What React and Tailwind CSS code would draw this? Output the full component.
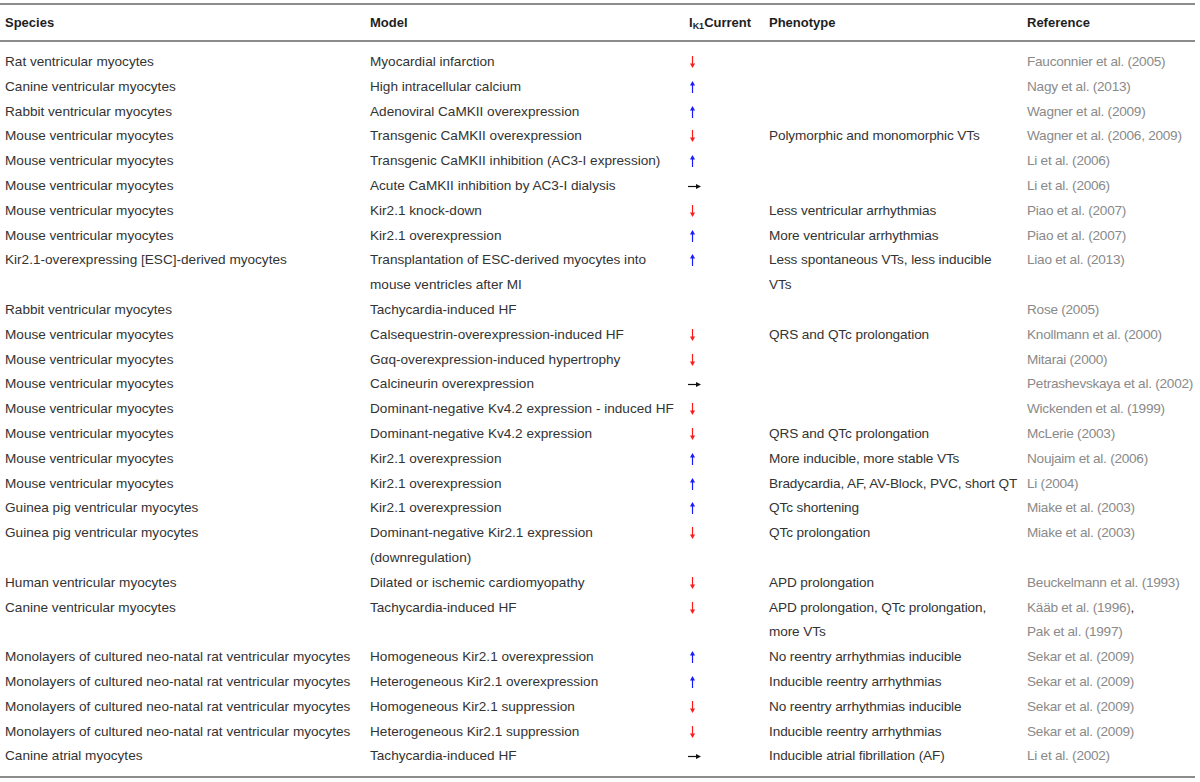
import React from "react";

const UP = "up";
const DOWN = "down";
const FLAT = "flat";

const rows = [
  { species: "Rat ventricular myocytes", model: ["Myocardial infarction"], current: DOWN, phenotype: [], ref: ["Fauconnier et al. (2005)"] },
  { species: "Canine ventricular myocytes", model: ["High intracellular calcium"], current: UP, phenotype: [], ref: ["Nagy et al. (2013)"] },
  { species: "Rabbit ventricular myocytes", model: ["Adenoviral CaMKII overexpression"], current: UP, phenotype: [], ref: ["Wagner et al. (2009)"] },
  { species: "Mouse ventricular myocytes", model: ["Transgenic CaMKII overexpression"], current: DOWN, phenotype: ["Polymorphic and monomorphic VTs"], ref: ["Wagner et al. (2006, 2009)"] },
  { species: "Mouse ventricular myocytes", model: ["Transgenic CaMKII inhibition (AC3-I expression)"], current: UP, phenotype: [], ref: ["Li et al. (2006)"] },
  { species: "Mouse ventricular myocytes", model: ["Acute CaMKII inhibition by AC3-I dialysis"], current: FLAT, phenotype: [], ref: ["Li et al. (2006)"] },
  { species: "Mouse ventricular myocytes", model: ["Kir2.1 knock-down"], current: DOWN, phenotype: ["Less ventricular arrhythmias"], ref: ["Piao et al. (2007)"] },
  { species: "Mouse ventricular myocytes", model: ["Kir2.1 overexpression"], current: UP, phenotype: ["More ventricular arrhythmias"], ref: ["Piao et al. (2007)"] },
  { species: "Kir2.1-overexpressing [ESC]-derived myocytes", model: ["Transplantation of ESC-derived myocytes into", "mouse ventricles after MI"], current: UP, phenotype: ["Less spontaneous VTs, less inducible", "VTs"], ref: ["Liao et al. (2013)"] },
  { species: "Rabbit ventricular myocytes", model: ["Tachycardia-induced HF"], current: null, phenotype: [], ref: ["Rose (2005)"] },
  { species: "Mouse ventricular myocytes", model: ["Calsequestrin-overexpression-induced HF"], current: DOWN, phenotype: ["QRS and QTc prolongation"], ref: ["Knollmann et al. (2000)"] },
  { species: "Mouse ventricular myocytes", model: ["G\u03b1q-overexpression-induced hypertrophy"], current: DOWN, phenotype: [], ref: ["Mitarai (2000)"] },
  { species: "Mouse ventricular myocytes", model: ["Calcineurin overexpression"], current: FLAT, phenotype: [], ref: ["Petrashevskaya et al. (2002)"] },
  { species: "Mouse ventricular myocytes", model: ["Dominant-negative Kv4.2 expression - induced HF"], current: DOWN, phenotype: [], ref: ["Wickenden et al. (1999)"] },
  { species: "Mouse ventricular myocytes", model: ["Dominant-negative Kv4.2 expression"], current: DOWN, phenotype: ["QRS and QTc prolongation"], ref: ["McLerie (2003)"] },
  { species: "Mouse ventricular myocytes", model: ["Kir2.1 overexpression"], current: UP, phenotype: ["More inducible, more stable VTs"], ref: ["Noujaim et al. (2006)"] },
  { species: "Mouse ventricular myocytes", model: ["Kir2.1 overexpression"], current: UP, phenotype: ["Bradycardia, AF, AV-Block, PVC, short QT"], ref: ["Li (2004)"] },
  { species: "Guinea pig ventricular myocytes", model: ["Kir2.1 overexpression"], current: UP, phenotype: ["QTc shortening"], ref: ["Miake et al. (2003)"] },
  { species: "Guinea pig ventricular myocytes", model: ["Dominant-negative Kir2.1 expression", "(downregulation)"], current: DOWN, phenotype: ["QTc prolongation"], ref: ["Miake et al. (2003)"] },
  { species: "Human ventricular myocytes", model: ["Dilated or ischemic cardiomyopathy"], current: DOWN, phenotype: ["APD prolongation"], ref: ["Beuckelmann et al. (1993)"] },
  { species: "Canine ventricular myocytes", model: ["Tachycardia-induced HF"], current: DOWN, phenotype: ["APD prolongation, QTc prolongation,", "more VTs"], ref: ["K\u00e4\u00e4b et al. (1996)", "Pak et al. (1997)"], comma: true },
  { species: "Monolayers of cultured neo-natal rat ventricular myocytes", model: ["Homogeneous Kir2.1 overexpression"], current: UP, phenotype: ["No reentry arrhythmias inducible"], ref: ["Sekar et al. (2009)"] },
  { species: "Monolayers of cultured neo-natal rat ventricular myocytes", model: ["Heterogeneous Kir2.1 overexpression"], current: UP, phenotype: ["Inducible reentry arrhythmias"], ref: ["Sekar et al. (2009)"] },
  { species: "Monolayers of cultured neo-natal rat ventricular myocytes", model: ["Homogeneous Kir2.1 suppression"], current: DOWN, phenotype: ["No reentry arrhythmias inducible"], ref: ["Sekar et al. (2009)"] },
  { species: "Monolayers of cultured neo-natal rat ventricular myocytes", model: ["Heterogeneous Kir2.1 suppression"], current: DOWN, phenotype: ["Inducible reentry arrhythmias"], ref: ["Sekar et al. (2009)"] },
  { species: "Canine atrial myocytes", model: ["Tachycardia-induced HF"], current: FLAT, phenotype: ["Inducible atrial fibrillation (AF)"], ref: ["Li et al. (2002)"] },
];

// thin arrows like the ones in the printed table
const Arrow = ({ dir }) => {
  if (dir === UP)
    return (
      <svg width="5" height="12" viewBox="0 0 5 12" className="inline-block align-[-2px]">
        <line x1="2.5" y1="3.5" x2="2.5" y2="12" stroke="#1a1aff" strokeWidth="1.2" />
        <polygon points="0,4.5 2.5,0 5,4.5" fill="#1a1aff" />
      </svg>
    );
  if (dir === DOWN)
    return (
      <svg width="5" height="12" viewBox="0 0 5 12" className="inline-block align-[-2px]">
        <line x1="2.5" y1="0" x2="2.5" y2="8.5" stroke="#ff1a1a" strokeWidth="1.2" />
        <polygon points="0,7.5 2.5,12 5,7.5" fill="#ff1a1a" />
      </svg>
    );
  if (dir === FLAT)
    return (
      <svg width="13" height="5" viewBox="0 0 13 5" className="inline-block align-[1px] -ml-[2px]">
        <line x1="0" y1="2.5" x2="9" y2="2.5" stroke="#111" strokeWidth="1.2" />
        <polygon points="8,0 13,2.5 8,5" fill="#111" />
      </svg>
    );
  return null;
};

const cols = "grid grid-cols-[365px_308px_91px_258px_1fr]";

export default function App() {
  return (
    <div
      className="w-[1200px] h-[782px] bg-white text-[#333]"
      style={{ fontFamily: "'Liberation Sans', Arial, sans-serif" }}
    >
      <div className="w-[1195px] pt-[3px]">
        <div className="border-t-2 border-[#8c8c8c]" />
        {/* header */}
        <div className={`${cols} h-[35px] items-center text-[13px] font-bold text-[#1e1e1e] pl-[5px]`}>
          <div>Species</div>
          <div>Model</div>
          <div className="pl-[11px] whitespace-nowrap">
            I<sub className="text-[9px]">K1</sub>Current
          </div>
          <div>Phenotype</div>
          <div>Reference</div>
        </div>
        <div className="border-t-2 border-[#8c8c8c]" />

        {/* body */}
        <div className="pt-[8px] pb-[7px] text-[13.6px] leading-[24.8px] whitespace-nowrap">
          {rows.map((r, i) => (
            <div key={i} className={`${cols} pl-[5px]`}>
              <div>{r.species}</div>
              <div>
                {r.model.map((m, j) => (
                  <div key={j}>{m}</div>
                ))}
              </div>
              <div className="pl-[12px]">
                <Arrow dir={r.current} />
              </div>
              <div className="tracking-[-0.1px]">
                {r.phenotype.map((p, j) => (
                  <div key={j}>{p}</div>
                ))}
              </div>
              <div className="text-[#8a8a8a] tracking-[-0.25px]">
                {r.ref.map((p, j) => (
                  <div key={j}>
                    {p}
                    {r.comma && j === 0 && <span className="text-[#333]">,</span>}
                  </div>
                ))}
              </div>
            </div>
          ))}
        </div>
        <div className="border-t-2 border-[#8c8c8c]" />
      </div>
    </div>
  );
}
